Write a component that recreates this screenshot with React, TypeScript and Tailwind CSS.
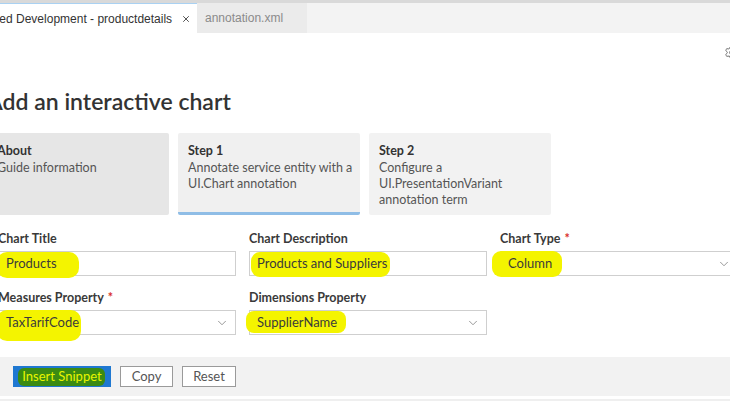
import { ChevronDown, Settings, X } from 'lucide-react'

const font = { fontFamily: '"Segoe UI", Lato, "Open Sans", sans-serif' }

function Hl({ className }: { className: string }) {
  return <span className={'absolute bg-[#f4f400] ' + className} />
}

function Field({ label, required, value, select, hl }: { label: string; required?: boolean; value: string; select?: boolean; hl?: string }) {
  return (
    <div className="flex w-[238px] shrink-0 flex-col">
      <div className="h-[18px] text-[12.5px] font-bold leading-[18px] text-[#3a3a3a]">
        {label}
        {required && <span className="ml-1 text-[#d9302c]">*</span>}
      </div>
      <div className="relative mt-[3px] flex h-[25px] items-center border border-[#cfcfcf] bg-white pl-[7px] pr-[6px]">
        {hl && <Hl className={hl} />}
        <span className="relative flex-1 text-[13px] text-[#3b3b3b]">{value}</span>
        {select && <ChevronDown className="relative h-[14px] w-[14px] text-[#777]" strokeWidth={1.3} />}
      </div>
    </div>
  )
}

function StepCard({ title, lines, active, bg }: { title: string; lines: string[]; active?: boolean; bg: string }) {
  return (
    <div className={'h-[82px] w-[182px] shrink-0 rounded-[2px] px-[10px] pt-[8px] ' + bg + (active ? ' border-b-[3px] border-[#8fbde6]' : '')}>
      <div className="text-[12.5px] font-bold leading-[19px] text-[#333]">{title}</div>
      {lines.map((l) => (
        <div key={l} className="whitespace-nowrap text-[12.5px] leading-[16px] text-[#555]">{l}</div>
      ))}
    </div>
  )
}

export default function App() {
  return (
    <div className="relative h-[410px] w-[730px] overflow-hidden bg-white" style={font}>
      <div className="h-[3px] bg-[#d9d9d9]" />
      <div className="flex h-[30px] bg-[#f3f3f3]" style={{ fontFamily: '"Liberation Sans", Arial, sans-serif' }}>
        <div className="ml-[-26px] flex w-[223px] shrink-0 items-center whitespace-nowrap border-t border-[#a9d1f2] bg-white text-[12px] text-[#333]">
          <span>Guided Development - productdetails</span>
          <X className="ml-[9px] h-[10px] w-[10px] text-[#444]" strokeWidth={2.2} />
        </div>
        <div className="flex w-[110px] shrink-0 items-center bg-[#ebebeb] pl-[8px] text-[12px] text-[#8a8a8a]">annotation.xml</div>
      </div>
      <div className="flex h-[33px] items-center justify-end pt-[5px]">
        <Settings className="mr-[-9px] h-[15px] w-[15px] text-[#666]" strokeWidth={1.5} />
      </div>
      <div className="ml-[-13px] pt-[20px]">
        <h1 className="text-[23px] font-semibold leading-[30px] text-[#333]">Add an interactive chart</h1>
        <div className="mt-[17px] flex gap-[9px]">
          <StepCard title="About" lines={['Guide information']} bg="bg-[#e6e6e6]" />
          <StepCard title="Step 1" lines={['Annotate service entity with a', 'UI.Chart annotation']} active bg="bg-[#f0f0f0]" />
          <StepCard title="Step 2" lines={['Configure a', 'UI.PresentationVariant', 'annotation term']} bg="bg-[#f2f2f2]" />
        </div>
      </div>
      <div className="ml-[-2px] mt-[15px] flex flex-col gap-[13px]">
        <div className="flex gap-[13px]">
          <Field label="Chart Title" value="Products" hl="left-[-2px] top-0 h-[26px] w-[82px] rounded-[10px]" />
          <Field label="Chart Description" value="Products and Suppliers" hl="left-[1px] top-0 h-[25px] w-[139px] rounded-[9px]" />
          <Field label="Chart Type" required value="Column" select hl="left-[-9px] top-[-1px] h-[26px] w-[70px] rounded-[9px]" />
        </div>
        <div className="flex gap-[13px]">
          <Field label="Measures Property" required value="TaxTarifCode" select hl="left-[-2px] top-[-1px] h-[31px] w-[84px] rounded-[10px]" />
          <Field label="Dimensions Property" value="SupplierName" select hl="left-[-4px] top-[0px] h-[22px] w-[100px] rounded-[8px]" />
        </div>
      </div>
      <div className="mt-[22px] flex h-[39px] items-center gap-[9px] bg-[#f2f2f2] pl-[13px]">
        <div className="relative flex h-[21px] w-[98px] items-center justify-center bg-[#1f78d1]">
          <span className="absolute left-[5px] top-[2px] h-[18px] w-[87px] rounded-[6px] bg-[#3b8b12]" />
          <span className="relative text-[13px] text-[#e8f500]">Insert Snippet</span>
        </div>
        <div className="flex h-[21px] w-[53px] items-center justify-center border border-[#9a9a9a] bg-white text-[13px] text-[#555]">Copy</div>
        <div className="flex h-[21px] w-[54px] items-center justify-center border border-[#9a9a9a] bg-white text-[13px] text-[#555]">Reset</div>
      </div>
      <div className="mt-[3px] h-[2px] bg-[#efefef]" />
    </div>
  )
}
